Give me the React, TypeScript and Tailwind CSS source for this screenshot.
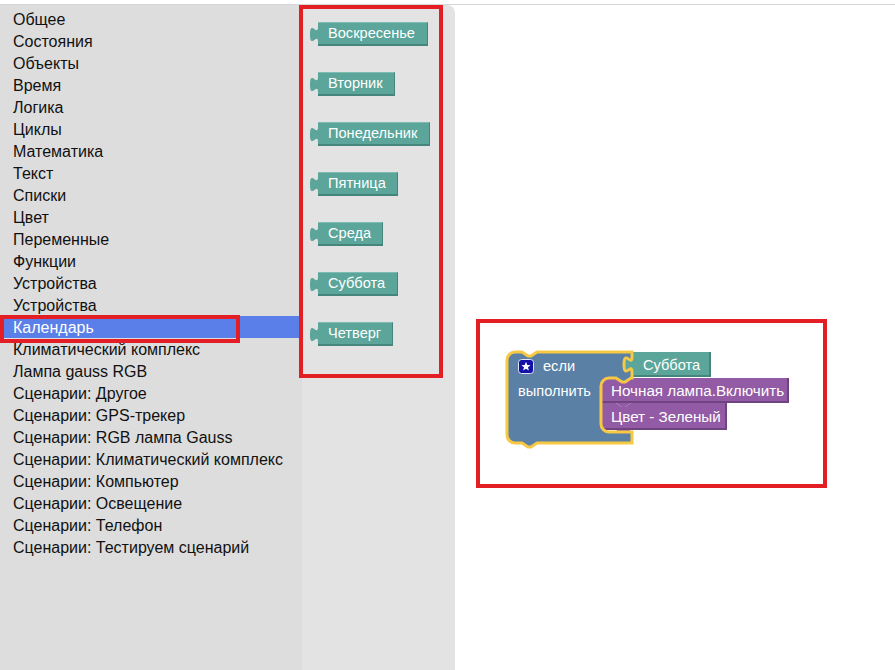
import React from "react";

const categories = [
  "Общее",
  "Состояния",
  "Объекты",
  "Время",
  "Логика",
  "Циклы",
  "Математика",
  "Текст",
  "Списки",
  "Цвет",
  "Переменные",
  "Функции",
  "Устройства",
  "Устройства",
  "Календарь",
  "Климатический комплекс",
  "Лампа gauss RGB",
  "Сценарии: Другое",
  "Сценарии: GPS-трекер",
  "Сценарии: RGB лампа Gauss",
  "Сценарии: Климатический комплекс",
  "Сценарии: Компьютер",
  "Сценарии: Освещение",
  "Сценарии: Телефон",
  "Сценарии: Тестируем сценарий",
];

const days = [
  { label: "Воскресенье", w: "w-[110px]" },
  { label: "Вторник", w: "w-[77px]" },
  { label: "Понедельник", w: "w-[112px]" },
  { label: "Пятница", w: "w-[80px]" },
  { label: "Среда", w: "w-[65px]" },
  { label: "Суббота", w: "w-[80px]" },
  { label: "Четверг", w: "w-[75px]" },
];

const TEAL = "#5ba59a";
const FONT = '"Liberation Sans", Arial, sans-serif';

function FlyBlock({ label, w }: { label: string; w: string }) {
  return (
    <div className="flex items-start h-[24px]">
      <svg width="8" height="24" viewBox="0 0 8 24" className="shrink-0">
        <path d="M8,5 C8,15 0,-3 0,12.5 S8,10 8,20 Z" fill={TEAL} />
      </svg>
      <div
        className={`${w} h-[24px] bg-[#5ba59a] border-t border-t-[#7cbcb2] border-b-2 border-r border-b-[#45857b] border-r-[#45857b] text-white text-[14.6px] pl-[10px] flex items-center leading-none`}
      >
        {label}
      </div>
    </div>
  );
}

function IfBlock() {
  const ifPath =
    "M0,8 A8,8 0 0 1 8,0 H15 l6,4 h3 l6,-4 H125 v5 c0,10 -8,-8 -8,7.5 s8,-2.5 8,7.5 v6 H124 l-6,4 h-3 l-6,-4 H102 a8,8 0 0 0 -8,8 V72 a8,8 0 0 0 8,8 H125 V91 H30 l-6,4 h-3 l-6,-4 H8 a8,8 0 0 1 -8,-8 Z";
  const stmt = (w: number, h: number) =>
    `M0,0 H15 l6,4 h3 l6,-4 H${w} V${h} H30 l-6,4 h-3 l-6,-4 H0 Z`;
  return (
    <svg
      width="300"
      height="110"
      viewBox="0 0 300 110"
      style={{ fontFamily: FONT }}
      className="absolute left-[45px] top-[340px]"
    >
      {/* если / выполнить */}
      <g transform="translate(7,7)">
        <path d={ifPath} fill="#5b80a5" />
      </g>
      {/* Суббота */}
      <g transform="translate(132,7)">
        <path d="M0,5 c0,10 -8,-8 -8,7.5 s8,-2.5 8,7.5 Z" fill={TEAL} />
        <rect x="0" y="0" width="79" height="25" fill={TEAL} />
        <rect x="0" y="23" width="79" height="2" fill="#45857b" />
        <rect x="77" y="0" width="2" height="25" fill="#45857b" />
        <text x="11" y="18" fill="#fff" fontSize="14.6">
          Суббота
        </text>
      </g>
      {/* Ночная лампа */}
      <g transform="translate(101,33)">
        <path d={stmt(188, 25)} fill="#935ba5" />
        <rect x="0" y="23" width="188" height="2" fill="#6f4380" />
        <rect x="186" y="0" width="2" height="25" fill="#6f4380" />
        <text x="10" y="18" fill="#fff" fontSize="15.2">
          Ночная лампа.Включить
        </text>
      </g>
      {/* Цвет */}
      <g transform="translate(101,58)">
        <path d={stmt(126, 27)} fill="#935ba5" />
        <rect x="0" y="25" width="126" height="2" fill="#6f4380" />
        <rect x="124" y="0" width="2" height="27" fill="#6f4380" />
        <text x="10" y="19" fill="#fff" fontSize="15.2">
          Цвет - Зеленый
        </text>
      </g>
      {/* selection outline */}
      <g transform="translate(7,7)">
        <path d={ifPath} fill="none" stroke="#f7c843" strokeWidth="3" />
      </g>
      {/* star icon */}
      <rect x="18.5" y="14.5" width="15" height="14" rx="3" fill="#1111a8" stroke="#dfe3f5" strokeWidth="1" />
      <path
        d="M26,16.8 L27.3,20.1 L30.6,20.2 L28,22.3 L28.9,25.6 L26,23.7 L23.1,25.6 L24,22.3 L21.4,20.2 L24.7,20.1 Z"
        fill="#fff"
      />
      <text x="43" y="26" fill="#fff" fontSize="14.6">
        если
      </text>
      <text x="18" y="51" fill="#fff" fontSize="14.6">
        выполнить
      </text>
    </svg>
  );
}

export default function App() {
  return (
    <div
      className="w-[895px] h-[670px] bg-white pt-[4px] overflow-hidden relative"
      style={{ fontFamily: FONT }}
    >
      <div className="flex h-[666px] border-t border-[#d6d6d6]">
        {/* toolbox */}
        <div className="w-[302px] bg-[#dddddd] pt-[3px] relative shrink-0">
          {categories.map((c, i) => (
            <div
              key={i}
              className={`h-[22px] pl-[13px] pt-[2px] flex items-center text-[16px] leading-none ${
                c === "Календарь" ? "bg-[#5a7fe8] text-white" : "text-[#111]"
              }`}
            >
              {c}
            </div>
          ))}
          <div className="absolute left-0 top-[310px] w-[240px] h-[28px] border-[4px] border-[#e31e24]" />
        </div>

        {/* flyout */}
        <div className="w-[153px] bg-[#e3e3e3] rounded-tr-[8px] pl-[8px] pt-[17px] flex flex-col gap-[26px] relative shrink-0">
          {days.map((d) => (
            <FlyBlock key={d.label} label={d.label} w={d.w} />
          ))}
          <div className="absolute left-[-3px] top-0 w-[144px] h-[373px] border-[4px] border-[#e31e24]" />
        </div>

        {/* workspace */}
        <div className="flex-1 relative">
          <div className="absolute left-[21px] top-[314px] w-[351px] h-[169px] border-[4px] border-[#e31e24]" />
          <IfBlock />
        </div>
      </div>
    </div>
  );
}
